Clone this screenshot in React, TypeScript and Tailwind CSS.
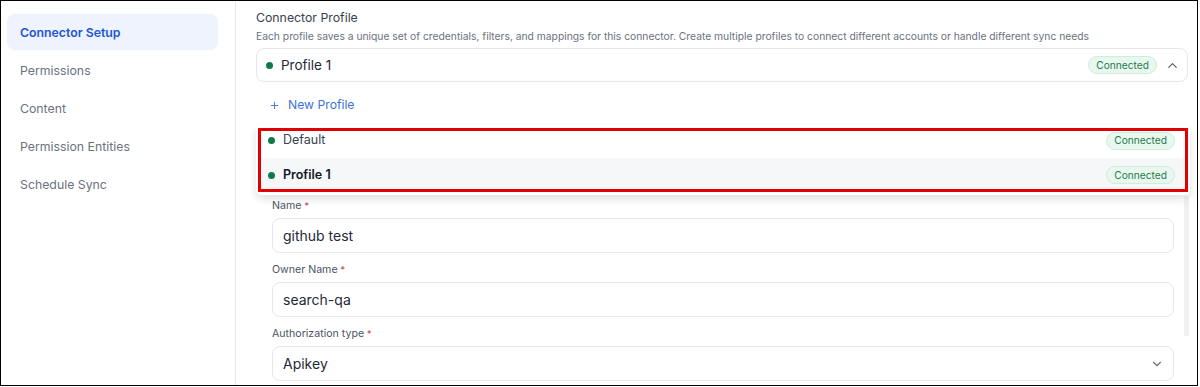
import { ChevronDown, ChevronUp, Plus } from 'lucide-react';

const navItems = ['Connector Setup', 'Permissions', 'Content', 'Permission Entities', 'Schedule Sync'];

function Badge() {
  return (
    <span className="inline-flex items-center h-[18px] px-[7px] rounded-full bg-[#e9f8ef] border border-[#cdeedb] text-[10.2px] text-[#1f7a4d] leading-none">
      Connected
    </span>
  );
}

function Dot() {
  return <span className="w-[7px] h-[7px] rounded-full bg-[#11784a] shrink-0" />;
}

function Field({ label, value, select }: { label: string; value: string; select?: boolean }) {
  return (
    <div className="flex flex-col">
      <div className="h-[14px] flex items-center text-[10.6px] text-[#4b5563]">
        {label} <span className="text-[#dc2626] ml-[3px] text-[9px]">*</span>
      </div>
      <div className="mt-[5px] h-[35px] rounded-[8px] border border-[#e5e7eb] bg-white flex items-center pl-[10px] pr-[9px]">
        <span className="flex-1 text-[14px] text-[#1f2937]">{value}</span>
        {select && <ChevronDown className="w-[14px] h-[14px] text-[#6b7280]" strokeWidth={2} />}
      </div>
    </div>
  );
}

export default function App() {
  return (
    <div className="w-[1200px] h-[387px] bg-white font-['Inter',sans-serif]">
      <div className="w-[1198px] h-[386px] border border-black flex overflow-hidden">
        <aside className="w-[235px] shrink-0 border-r border-[#e5e7eb] pl-[6px] pr-[17px] pt-[13px] flex flex-col gap-[2px]">
          {navItems.map((item, i) => (
            <div
              key={item}
              className={`h-[36px] rounded-[8px] flex items-center pl-[13px] pt-[2px] text-[12.3px] ${
                i === 0 ? 'bg-[#eef3fd] text-[#1f56d6] font-semibold' : 'text-[#6b7280]'
              }`}
            >
              {item}
            </div>
          ))}
        </aside>

        <main className="flex-1 pl-[20px] pr-[9px] pt-[8px] relative">
          <div className="text-[12.3px] text-[#374151] leading-[18px]">Connector Profile</div>
          <div className="text-[10.3px] text-[#6b7280] leading-[16px] mt-[1px]">
            Each profile saves a unique set of credentials, filters, and mappings for this connector. Create multiple profiles to connect different accounts or handle different sync needs
          </div>

          <div className="mt-[4px] h-[34px] rounded-[8px] border border-[#e5e7eb] flex items-center pl-[9px] pr-[7px]">
            <Dot />
            <span className="ml-[8px] text-[13.5px] text-[#1f2937] flex-1">Profile 1</span>
            <Badge />
            <ChevronUp className="ml-[8px] w-[15px] h-[15px] text-[#4b5563]" strokeWidth={1.75} />
          </div>

          <div className="h-[44px] flex items-center pl-[13px] pt-[2px] text-[12.2px] text-[#3b74d9] gap-[8px]">
            <Plus className="w-[11px] h-[11px]" strokeWidth={2} />
            New Profile
          </div>

          <div className="relative">
            <div className="flex">
              <div className="flex-1 pl-[16px] pr-[14px] pt-[73px] flex flex-col gap-[10px]">
                <Field label="Name" value="github test" />
                <Field label="Owner Name" value="search-qa" />
                <Field label="Authorization type" value="Apikey" select />
              </div>
            </div>
            <div className="absolute right-[-1px] top-[70px] w-[5px] h-[140px] bg-[#f0f1f3]" />

            <div className="absolute left-0 right-[-2px] top-[-1px] bg-white rounded-[6px] shadow-[0_4px_8px_rgba(0,0,0,0.12)] pt-[3px] pb-[3px] px-[2px]">
              <div className="border-[3px] border-[#e00000]">
                <div className="h-[27px] flex items-center pl-[7px] pr-[10px] pb-[8px] bg-white">
                  <Dot />
                  <span className="ml-[8px] text-[12.5px] text-[#374151] flex-1">Default</span>
                  <Badge />
                </div>
                <div className="h-[31px] flex items-center pl-[7px] pr-[10px] pt-[3px] bg-[#f6f7f9]">
                  <Dot />
                  <span className="ml-[8px] text-[12.5px] text-[#111827] font-semibold flex-1">Profile 1</span>
                  <Badge />
                </div>
              </div>
            </div>
          </div>
        </main>
      </div>
    </div>
  );
}
